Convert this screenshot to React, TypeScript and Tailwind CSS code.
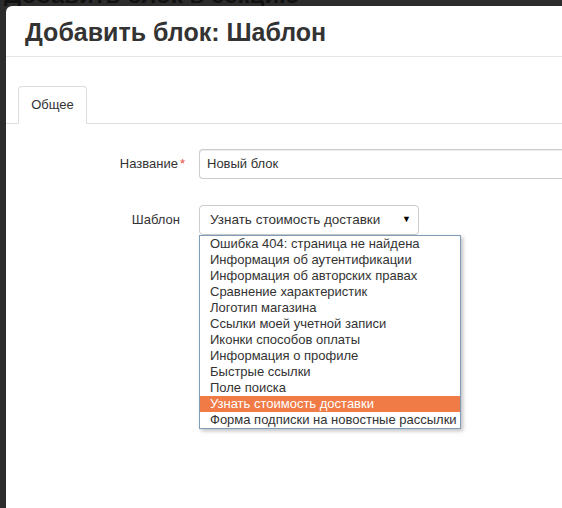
import React from 'react';

const OPTIONS = [
    'Ошибка 404: страница не найдена',
    'Информация об аутентификации',
    'Информация об авторских правах',
    'Сравнение характеристик',
    'Логотип магазина',
    'Ссылки моей учетной записи',
    'Иконки способов оплаты',
    'Информация о профиле',
    'Быстрые ссылки',
    'Поле поиска',
    'Узнать стоимость доставки',
    'Форма подписки на новостные рассылки',
];

const SELECTED = 'Узнать стоимость доставки';

const App: React.FC = () => {
    return (
        <div className="w-[562px] h-[508px] overflow-hidden bg-[#2c2c2c] flex flex-col font-['Liberation_Sans',Arial,sans-serif]">
            {/* page title behind the modal, mostly hidden */}
            <div className="h-[6px] overflow-hidden pl-[4px]">
                <div className="-mt-[17px] text-[24px] font-bold leading-[24px] text-[#111]">Добавить блок в секцию</div>
            </div>
            <div className="flex-1 ml-[6px] bg-white rounded-tl-[6px] flex flex-col">
                <div className="h-[51px] border-b border-[#e5e5e5] pl-[19px] pt-[12px]">
                    <h1 className="text-[25px] font-bold leading-[29px] text-[#333]">Добавить блок: Шаблон</h1>
                </div>
                <div className="pt-[29px]">
                    <div className="flex border-b border-[#dddddd] pl-[12px]">
                        <div className="-mb-px h-[38px] w-[69px] border border-[#dddddd] border-b-white rounded-t-[4px] bg-white flex items-center justify-center text-[13px] text-[#333]">
                            Общее
                        </div>
                    </div>
                    <div className="pt-[25px] flex flex-col gap-[26px]">
                        <div className="flex items-center">
                            <label className="w-[180px] text-right text-[13px] text-[#333] pr-[1px]">
                                Название<span className="text-[#e74c3c] ml-[2px]">*</span>
                            </label>
                            <div className="ml-[13px] flex-1 h-[30px] border border-[#cccccc] rounded-l-[4px] border-r-0 flex items-center pl-[7px] text-[13px] text-[#333] shadow-[inset_0_1px_1px_rgba(0,0,0,0.075)]">
                                Новый блок
                            </div>
                        </div>
                        <div className="flex items-center">
                            <label className="w-[174px] text-right text-[13px] text-[#333]">Шаблон</label>
                            <div className="relative ml-[19px]">
                                <div className="w-[220px] h-[30px] border border-[#cccccc] rounded-[4px] flex items-center justify-between pl-[10px] pr-[7px] text-[13.5px] text-[#333]">
                                    <span>{SELECTED}</span>
                                    <span className="text-[9px] text-black">▼</span>
                                </div>
                                <ul className="absolute left-0 top-[30px] w-[262px] border border-[#7f9db9] bg-white shadow-[2px_2px_4px_rgba(0,0,0,0.25)] z-10">
                                    {OPTIONS.map(opt => (
                                        <li
                                            key={opt}
                                            className={`h-[16px] leading-[16px] pl-[10px] text-[13px] whitespace-nowrap ${opt === SELECTED ? 'bg-[#f07b47] text-white' : 'text-[#333]'}`}
                                        >
                                            {opt}
                                        </li>
                                    ))}
                                </ul>
                            </div>
                        </div>
                    </div>
                </div>
            </div>
        </div>
    );
};

export default App;
